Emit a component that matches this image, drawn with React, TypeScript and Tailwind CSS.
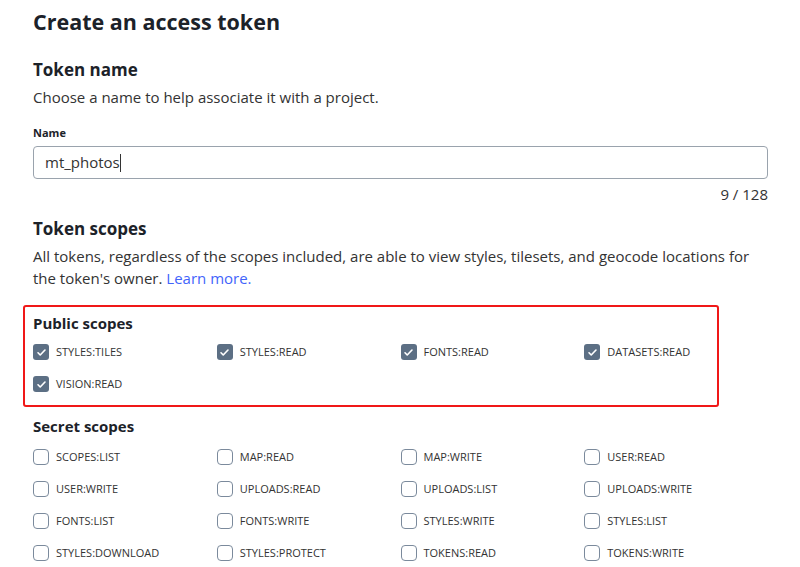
import React from 'react';

const publicScopes = ['STYLES:TILES', 'STYLES:READ', 'FONTS:READ', 'DATASETS:READ', 'VISION:READ'];
const secretScopes = [
  'SCOPES:LIST', 'MAP:READ', 'MAP:WRITE', 'USER:READ',
  'USER:WRITE', 'UPLOADS:READ', 'UPLOADS:LIST', 'UPLOADS:WRITE',
  'FONTS:LIST', 'FONTS:WRITE', 'STYLES:WRITE', 'STYLES:LIST',
  'STYLES:DOWNLOAD', 'STYLES:PROTECT', 'TOKENS:READ', 'TOKENS:WRITE',
];

function Scope({ label, checked }: { label: string; checked: boolean }) {
  return (
    <label className="flex items-center gap-[7px] h-8">
      {checked ? (
        <span className="w-4 h-4 rounded-[3px] bg-[#5c6f84] flex items-center justify-center">
          <svg width="11" height="11" viewBox="0 0 12 12" fill="none">
            <path d="M2.2 6.3l2.4 2.4 5.2-5.4" stroke="#fff" strokeWidth="1.8" strokeLinecap="round" strokeLinejoin="round" />
          </svg>
        </span>
      ) : (
        <span className="w-4 h-4 rounded-[4px] border border-[#7b8a9c] bg-white" />
      )}
      <span className="text-[11px] text-[#333]">{label}</span>
    </label>
  );
}

export default function App() {
  return (
    <div className="w-[800px] h-[567px] overflow-hidden bg-white text-[#1f2328] font-['Open_Sans',sans-serif]">
      <div className="px-[33px] pr-[32px] pt-[6px]">
        <h1 className="text-[21.5px] font-bold leading-8 text-[#1c2229]">Create an access token</h1>

        {/* Token name */}
        <h2 className="mt-[20px] text-[17px] font-bold leading-6 text-[#1c2229]">Token name</h2>
        <p className="mt-[3px] text-[15px] leading-6 text-[#333]">Choose a name to help associate it with a project.</p>
        <div className="mt-[16px] text-[11px] font-bold leading-4 text-[#1c2229]">Name</div>
        <div className="mt-[5px] h-[33px] rounded-[4px] border border-[#9aa3ad] flex items-center px-[11px] text-[15px] text-[#333]">
          mt_photos<span className="w-px h-[18px] bg-[#333]" />
        </div>
        <div className="mt-[5px] text-right text-[15px] leading-5 text-[#333]">9 / 128</div>

        {/* Token scopes */}
        <h2 className="mt-[13px] text-[17px] font-bold leading-6 text-[#1c2229]">Token scopes</h2>
        <p className="mt-[4px] text-[15px] leading-[22px] text-[#333]">
          All tokens, regardless of the scopes included, are able to view styles, tilesets, and geocode locations for the token's owner.{' '}
          <a className="text-[#4264fb]">Learn more.</a>
        </p>

        <div className="relative mt-[24px]">
          <div className="absolute -left-[10px] -top-[8px] w-[696px] h-[102px] border-2 border-[#f01818] rounded-[3px] pointer-events-none" />
          <h3 className="text-[15px] font-bold leading-5 text-[#1c2229]">Public scopes</h3>
          <div className="mt-[3px] grid grid-cols-4">
            {publicScopes.map((s) => (
              <Scope key={s} label={s} checked />
            ))}
          </div>
        </div>

        <h3 className="mt-[16px] text-[15px] font-bold leading-5 text-[#1c2229]">Secret scopes</h3>
        <div className="mt-[5px] grid grid-cols-4">
          {secretScopes.map((s) => (
            <Scope key={s} label={s} checked={false} />
          ))}
        </div>
      </div>
    </div>
  );
}
